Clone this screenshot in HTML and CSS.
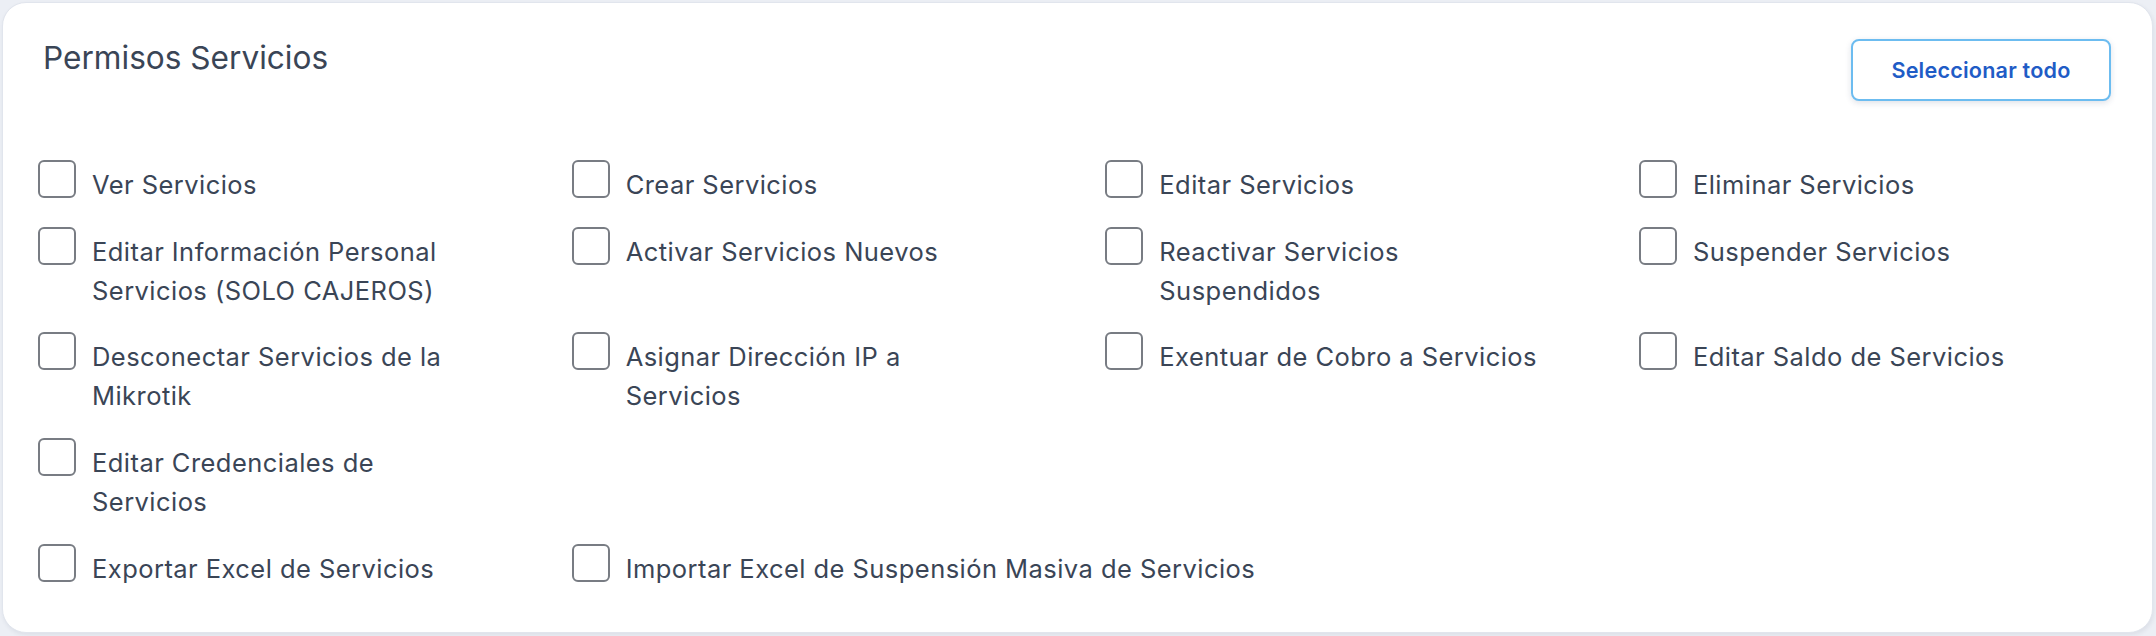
FILE: index.html
```html
<!DOCTYPE html>
<html lang="es">
<head>
<meta charset="utf-8">
<title>Permisos Servicios</title>
<link rel="stylesheet" href="styles.css">
</head>
<body>
<section class="card">
  <header class="card-header">
    <h2 class="card-title">Permisos Servicios</h2>
    <button class="btn-select" type="button">Seleccionar todo</button>
  </header>
  <div class="perm-grid">
    <label class="perm"><span class="box"></span><span class="text">Ver Servicios</span></label>
    <label class="perm"><span class="box"></span><span class="text">Crear Servicios</span></label>
    <label class="perm"><span class="box"></span><span class="text">Editar Servicios</span></label>
    <label class="perm"><span class="box"></span><span class="text">Eliminar Servicios</span></label>

    <label class="perm"><span class="box"></span><span class="text">Editar Información Personal Servicios (SOLO CAJEROS)</span></label>
    <label class="perm"><span class="box"></span><span class="text">Activar Servicios Nuevos</span></label>
    <label class="perm"><span class="box"></span><span class="text">Reactivar Servicios Suspendidos</span></label>
    <label class="perm"><span class="box"></span><span class="text">Suspender Servicios</span></label>

    <label class="perm"><span class="box"></span><span class="text">Desconectar Servicios de la Mikrotik</span></label>
    <label class="perm"><span class="box"></span><span class="text">Asignar Dirección IP a Servicios</span></label>
    <label class="perm"><span class="box"></span><span class="text">Exentuar de Cobro a Servicios</span></label>
    <label class="perm"><span class="box"></span><span class="text">Editar Saldo de Servicios</span></label>

    <label class="perm"><span class="box"></span><span class="text">Editar Credenciales de Servicios</span></label>
    <span class="perm-empty"></span>
    <span class="perm-empty"></span>
    <span class="perm-empty"></span>

    <label class="perm"><span class="box"></span><span class="text">Exportar Excel de Servicios</span></label>
    <label class="perm perm-wide"><span class="box"></span><span class="text">Importar Excel de Suspensión Masiva de Servicios</span></label>
  </div>
</section>
</body>
</html>
```

FILE: styles.css
```css
* { box-sizing: border-box; }

html, body {
  margin: 0;
  padding: 0;
}

body {
  background: #eceff5;
  font-family: Inter, "Noto Sans", "Liberation Sans", sans-serif;
  width: 2156px;
  height: 636px;
  overflow: hidden;
}

.card {
  margin: 2px 3px 0 2px;
  height: 631px;
  background: #ffffff;
  border: 1px solid #e1e5ed;
  border-radius: 24px;
  box-shadow: 1px 2px 4px rgba(40, 50, 80, 0.08);
  padding: 35px 41px 0 35px;
}

.card-header {
  display: flex;
  justify-content: space-between;
  align-items: flex-start;
}

.card-title {
  margin: 0;
  padding-left: 5px;
  font-size: 31.6px;
  line-height: 40px;
  font-weight: 400;
  color: #3a4556;
}

.btn-select {
  margin-top: 1px;
  width: 260px;
  height: 62px;
  background: #ffffff;
  border: 2px solid #6cbcf0;
  border-radius: 8px;
  box-shadow: 0 2px 6px rgba(30, 50, 90, 0.14);
  font-family: Inter, "Noto Sans", "Liberation Sans", sans-serif;
  font-size: 21.6px;
  font-weight: 600;
  letter-spacing: 0.2px;
  color: #1f5cc6;
  padding: 0;
}

.perm-grid {
  margin-top: 59px;
  display: grid;
  grid-template-columns: repeat(4, 439px);
  column-gap: 94.67px;
  row-gap: 22.7px;
}

.perm {
  display: flex;
  align-items: flex-start;
  gap: 16px;
}

.perm-wide {
  grid-column: span 3;
}

.box {
  flex: none;
  width: 38px;
  height: 38px;
  border: 2px solid #787c83;
  border-radius: 6px;
  background: #ffffff;
}

.text {
  margin-top: 5px;
  font-size: 25.5px;
  line-height: 39px;
  letter-spacing: 0.45px;
  color: #3a4556;
}
```
